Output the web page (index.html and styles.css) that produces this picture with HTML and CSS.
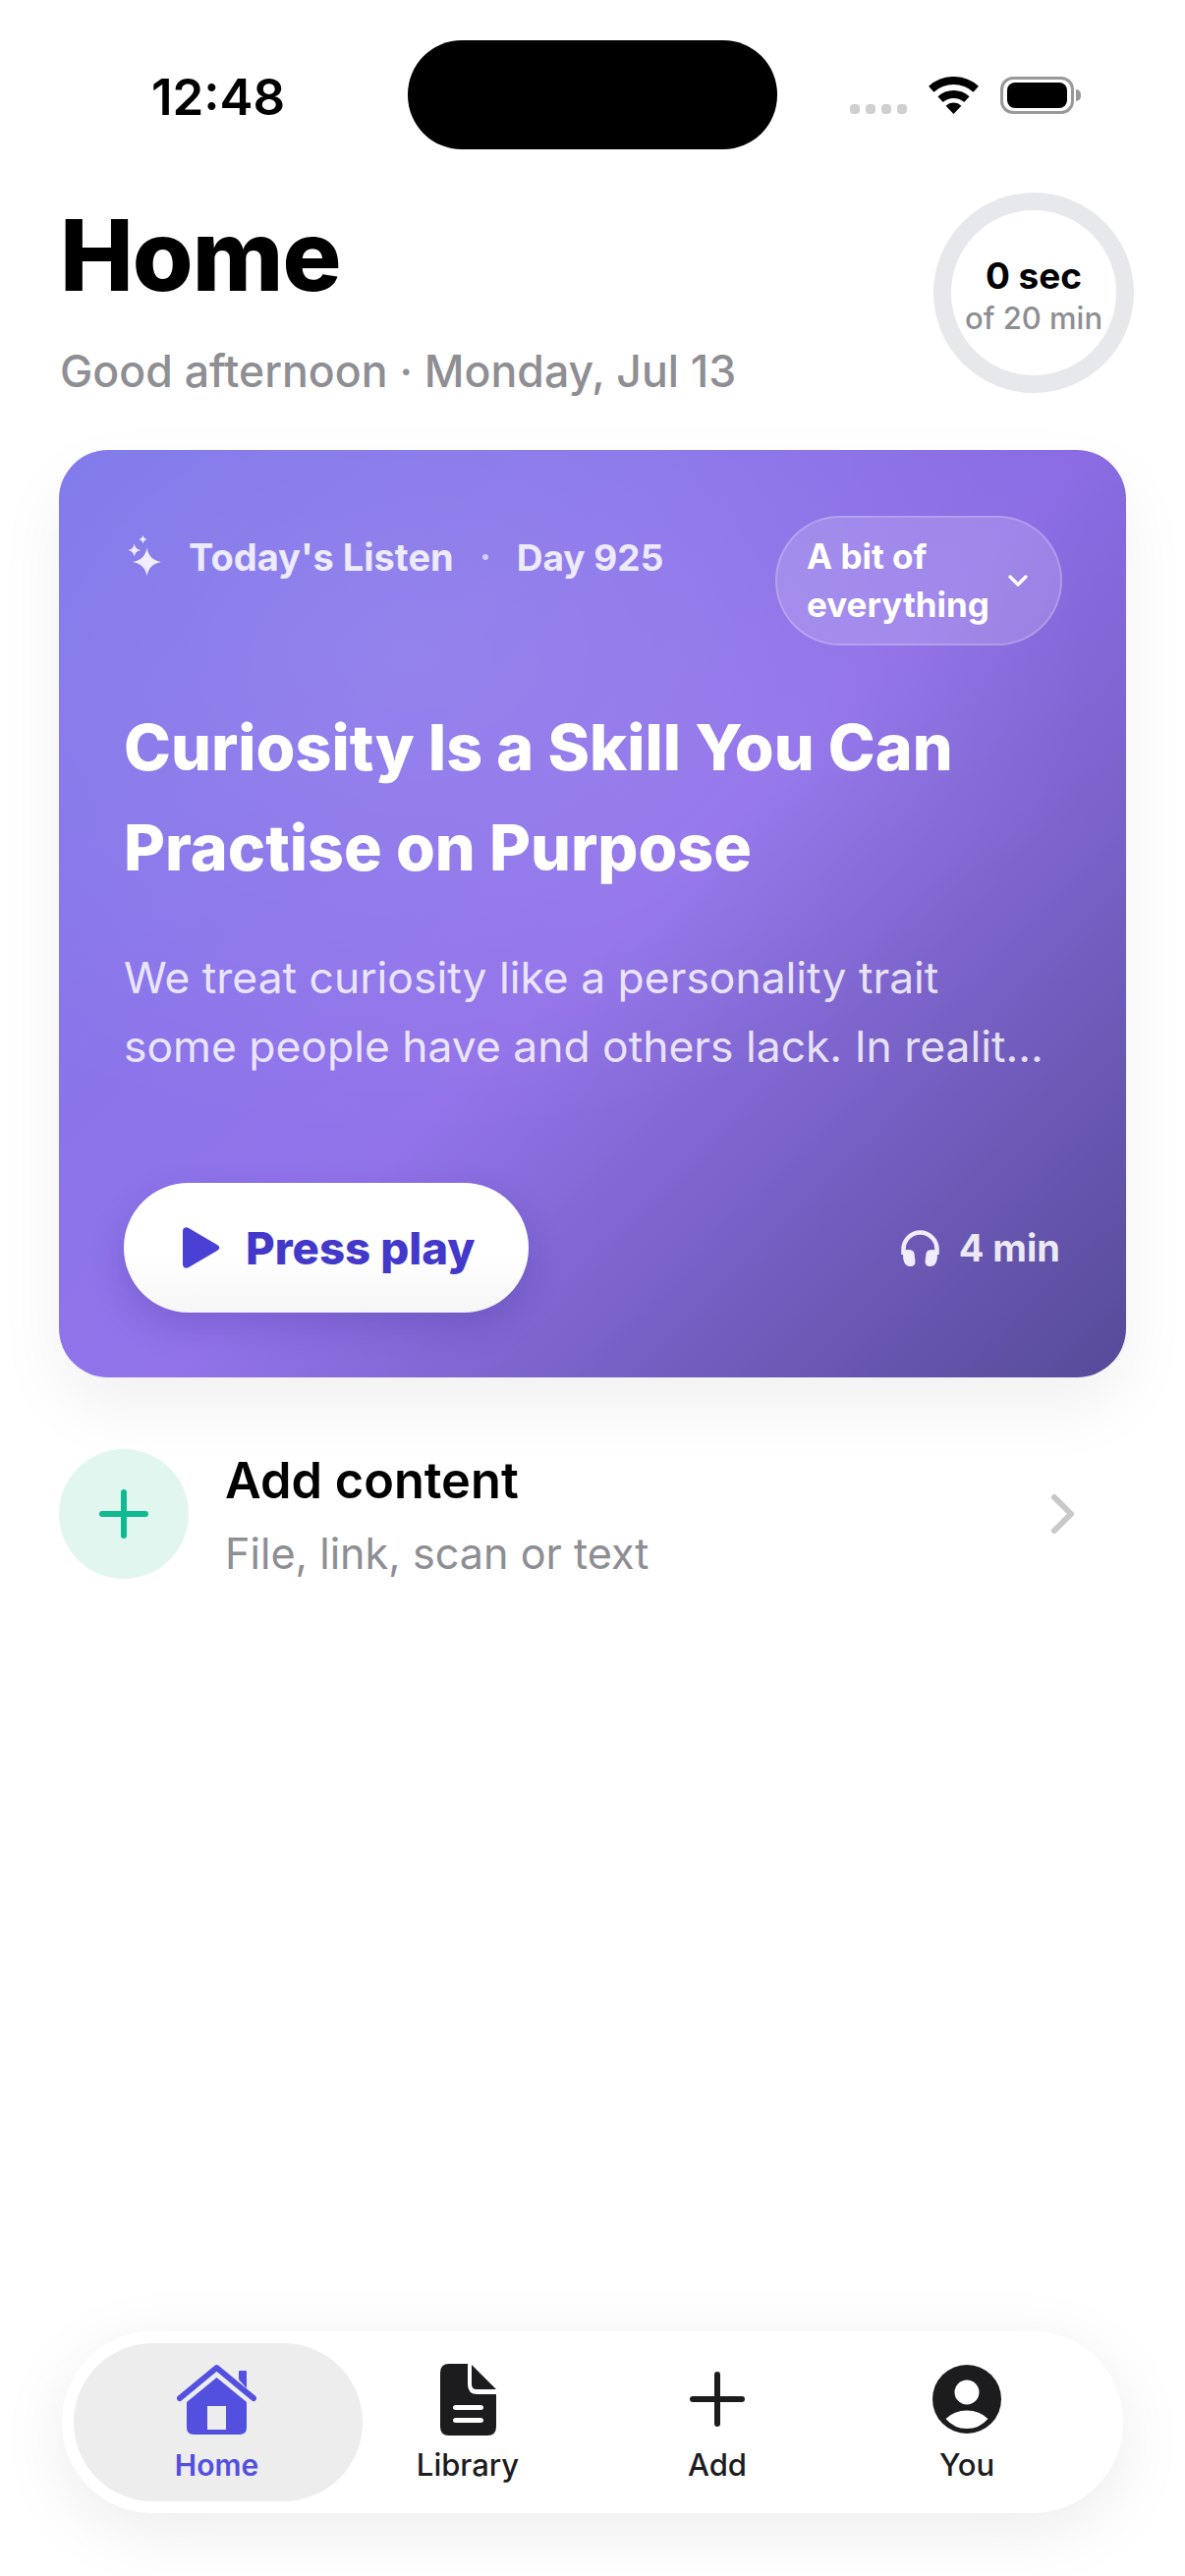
FILE: index.html
```html
<!doctype html>
<html>
<head>
<meta charset="utf-8">
<meta name="viewport" content="width=device-width, initial-scale=1.0">
<link rel="stylesheet" href="styles.css">
<title>Home</title>
</head>
<body>
<div class="screen">

  <div class="status">
    <div class="status-time">12:48</div>
    <div class="island"></div>
    <div class="status-icons">
      <div class="signal"><i></i><i></i><i></i><i></i></div>
      <svg class="wifi" viewBox="0 0 51 38">
        <path d="M2.75 12.7A34 34 0 0 1 48.25 12.7" fill="none" stroke="#000" stroke-width="8"/>
        <path d="M12.1 23.1A20 20 0 0 1 38.9 23.1" fill="none" stroke="#000" stroke-width="8"/>
        <path d="M25.5 38L17.6 29.8A11 11 0 0 1 33.4 29.8Z" fill="#000"/>
      </svg>
      <div class="battery"><div class="battery-level"></div></div>
      <div class="battery-tip"></div>
    </div>
  </div>

  <div class="header">
    <div class="header-text">
      <h1>Home</h1>
      <p class="greeting">Good afternoon · Monday, Jul 13</p>
    </div>
    <div class="ring">
      <div class="ring-value">0 sec</div>
      <div class="ring-goal">of 20 min</div>
    </div>
  </div>

  <div class="card">
    <div class="card-top">
      <div class="card-label">
        <svg class="sparkle" viewBox="0 0 36 44">
          <path d="M20.5 12.5Q22.5 25 35 27Q22.5 29 20.5 41.5Q18.5 29 6 27Q18.5 25 20.5 12.5Z" fill="#f1edfd"/>
          <path d="M7.7 8.5Q8.6 14.1 14.2 15Q8.6 15.9 7.7 21.5Q6.8 15.9 1.2 15Q6.8 14.1 7.7 8.5Z" fill="#f1edfd"/>
          <path d="M16.5 -0.5Q17.1 3.4 21 4Q17.1 4.6 16.5 8.5Q15.9 4.6 12 4Q15.9 3.4 16.5 -0.5Z" fill="#f1edfd"/>
        </svg>
        <span>Today's Listen</span>
        <span class="label-dot"></span>
        <span class="label-day">Day 925</span>
      </div>
      <div class="topic">
        <span>A bit of<br>everything</span>
        <svg class="topic-chevron" viewBox="0 0 22 14"><path d="M3 3L11 11L19 3" fill="none" stroke="#fff" stroke-width="3.4" stroke-linecap="round" stroke-linejoin="round"/></svg>
      </div>
    </div>
    <h2 class="card-title">Curiosity Is a Skill You Can<br>Practise on Purpose</h2>
    <p class="card-desc">We treat curiosity like a personality trait<br>some people have and others lack. In realit...</p>
    <div class="card-bottom">
      <div class="play-btn">
        <svg class="play-icon" viewBox="0 0 38 42"><path d="M0 4C0 1 3 -1 6 1L35 18C38 20 38 22 35 24L6 41C3 43 0 41 0 38Z" fill="#4b40d4"/></svg>
        <span>Press play</span>
      </div>
      <div class="duration">
        <svg class="phones" viewBox="0 0 39 37">
          <path d="M2.5 25V19.5A17 17 0 0 1 36.5 19.5V25" fill="none" stroke="#f1edfd" stroke-width="4.5"/>
          <path d="M2 25Q2 20 7 20Q13 20 13.5 24L14.5 32Q14.5 37 9.5 37Q2 37 2 25Z" fill="#f1edfd"/>
          <path d="M37 25Q37 20 32 20Q26 20 25.5 24L24.5 32Q24.5 37 29.5 37Q37 37 37 25Z" fill="#f1edfd"/>
        </svg>
        <span>4 min</span>
      </div>
    </div>
  </div>

  <div class="add-row">
    <div class="add-circle">
      <svg viewBox="0 0 50 50"><path d="M25 3V47M3 25H47" fill="none" stroke="#10b98f" stroke-width="6" stroke-linecap="round"/></svg>
    </div>
    <div class="add-text">
      <div class="add-title">Add content</div>
      <div class="add-sub">File, link, scan or text</div>
    </div>
    <svg class="add-chevron" viewBox="0 0 26 42"><path d="M4 4L21 21L4 38" fill="none" stroke="#c7c7cc" stroke-width="6" stroke-linecap="round" stroke-linejoin="round"/></svg>
  </div>

  <div class="nav">
    <div class="nav-item nav-active">
      <svg class="nav-icon icon-home" viewBox="0 0 81 72">
        <path d="M3 35L40.5 4L78 35" fill="none" stroke="#5350e0" stroke-width="6" stroke-linecap="round" stroke-linejoin="round"/>
        <path d="M63 16V8Q63 7 64 7H70Q71 7 71 8V25Z" fill="#5350e0"/>
        <path d="M40.5 14L71 39V65Q71 72 64 72H17Q10 72 10 65V39ZM31 43V67H50V43Z" fill="#5350e0" fill-rule="evenodd"/>
      </svg>
      <span>Home</span>
    </div>
    <div class="nav-item">
      <svg class="nav-icon icon-doc" viewBox="0 0 57 73">
        <path d="M9 0H28V21Q28 31 38 31H57V64Q57 73 48 73H9Q0 73 0 64V9Q0 0 9 0ZM16 42Q13 42 13 44.5Q13 47 16 47H41Q44 47 44 44.5Q44 42 41 42ZM16 55Q13 55 13 57.5Q13 60 16 60H41Q44 60 44 57.5Q44 55 41 55Z" fill="#1c1c1e" fill-rule="evenodd"/>
        <path d="M32 1L57 26H37Q32 26 32 21Z" fill="#1c1c1e"/>
      </svg>
      <span>Library</span>
    </div>
    <div class="nav-item">
      <svg class="nav-icon icon-plus" viewBox="0 0 56 56"><path d="M28 3V53M3 28H53" fill="none" stroke="#1c1c1e" stroke-width="6" stroke-linecap="round"/></svg>
      <span>Add</span>
    </div>
    <div class="nav-item">
      <svg class="nav-icon icon-user" viewBox="0 0 70 70">
        <circle cx="35" cy="35" r="35" fill="#1c1c1e"/>
        <circle cx="35" cy="28" r="12.5" fill="#fff"/>
        <path d="M13.5 55Q22 46.5 35 46.5Q48 46.5 56.5 55Q48 65 35 65Q22 65 13.5 55Z" fill="#fff"/>
      </svg>
      <span>You</span>
    </div>
  </div>

</div>
</body>
</html>
```

FILE: styles.css
```css
* {
    box-sizing: border-box;
}
html, body {
    margin: 0;
    padding: 0;
    background: #fff;
}
body {
    font-family: Inter, "Liberation Sans", sans-serif;
    color: #000;
}
h1, h2, p {
    margin: 0;
}
.screen {
    width: 1206px;
    height: 2622px;
    overflow: hidden;
    display: flex;
    flex-direction: column;
}

/* status bar */
.status {
    display: flex;
    height: 152px;
    padding-top: 41px;
}
.status-time {
    width: 415px;
    padding-left: 154px;
    padding-top: 30px;
    font-size: 51px;
    font-weight: 600;
    line-height: 55px;
}
.island {
    width: 376px;
    height: 111px;
    background: #000;
    border-radius: 55px;
}
.status-icons {
    display: flex;
    align-items: flex-end;
    height: 75px;
    padding-left: 74px;
}
.signal {
    display: flex;
    gap: 6px;
}
.signal i {
    display: block;
    width: 10px;
    height: 10px;
    border-radius: 4px;
    background: #cfcfcf;
}
.wifi {
    width: 51px;
    height: 38px;
    margin-left: 22px;
}
.battery {
    width: 75px;
    height: 38px;
    margin-left: 22px;
    padding: 3px 4px;
    border: 3px solid #999;
    border-radius: 13px;
}
.battery-level {
    height: 100%;
    background: #000;
    border-radius: 8px;
}
.battery-tip {
    width: 5px;
    height: 12px;
    margin: 0 0 13px 2px;
    background: #999;
    border-radius: 0 6px 6px 0;
}

/* header */
.header {
    display: flex;
    justify-content: space-between;
    height: 204px;
    margin-top: 44px;
    padding: 0 52px 0 61px;
}
h1 {
    margin-top: 14px;
    font-size: 100px;
    font-weight: 850;
    line-height: 100px;
    letter-spacing: -1px;
}
.greeting {
    margin-top: 44px;
    font-size: 44.6px;
    font-weight: 500;
    line-height: 48px;
    color: #8e8e93;
}
.ring {
    width: 204px;
    height: 204px;
    padding-top: 6px;
    border: 18px solid #e7e8ec;
    border-radius: 50%;
    display: flex;
    flex-direction: column;
    align-items: center;
    justify-content: center;
    white-space: nowrap;
}
.ring-value {
    font-size: 37px;
    font-weight: 700;
    line-height: 46px;
}
.ring-goal {
    font-size: 31px;
    font-weight: 500;
    line-height: 40px;
    color: #8e8e93;
}

/* today's listen card */
.card {
    margin: 58px 60px 0;
    height: 944px;
    padding: 67px 65px 0 66px;
    border-radius: 50px;
    color: #fff;
    background:
        radial-gradient(ellipse 500px 400px at 100% 0%, rgba(90, 60, 190, 0.14), rgba(90, 60, 190, 0)),
        radial-gradient(ellipse 700px 500px at 33% 22%, rgba(255, 255, 255, 0.1), rgba(255, 255, 255, 0)),
        linear-gradient(135deg, #7d76ea 0%, #9273ea 52%, #564a98 100%);
    box-shadow: 0 30px 70px rgba(0, 0, 0, 0.06);
}
.card-top {
    display: flex;
    justify-content: space-between;
    align-items: flex-start;
}
.card-label {
    display: flex;
    align-items: center;
    height: 84px;
    font-size: 38px;
    font-weight: 700;
    color: rgba(255, 255, 255, 0.86);
}
.label-day {
    font-size: 37px;
}
.sparkle {
    width: 36px;
    height: 44px;
    margin-left: 3px;
    margin-right: 27px;
    overflow: visible;
}
.label-dot {
    width: 6px;
    height: 6px;
    margin: 0 29px;
    border-radius: 50%;
    background: rgba(255, 255, 255, 0.6);
}
.topic {
    display: flex;
    align-items: center;
    gap: 18px;
    height: 132px;
    padding: 0 32px 0 30px;
    border: 2px solid rgba(255, 255, 255, 0.2);
    border-radius: 66px;
    background: rgba(255, 255, 255, 0.16);
    font-size: 35px;
    font-weight: 700;
    line-height: 49px;
    white-space: nowrap;
}
.topic-chevron {
    width: 22px;
    height: 14px;
}
.card-title {
    margin-top: 53px;
    font-size: 64.5px;
    font-weight: 800;
    line-height: 102px;
    white-space: nowrap;
}
.card-desc {
    margin-top: 46px;
    font-size: 44.4px;
    line-height: 70px;
    color: rgba(255, 255, 255, 0.84);
    white-space: nowrap;
}
.card-bottom {
    display: flex;
    justify-content: space-between;
    align-items: center;
    margin-top: 104px;
}
.play-btn {
    display: flex;
    align-items: center;
    gap: 26px;
    width: 412px;
    height: 132px;
    padding-left: 60px;
    border-radius: 66px;
    background: linear-gradient(180deg, #fff 55%, #f6f6f7 100%);
    box-shadow: 0 14px 36px rgba(40, 20, 120, 0.2);
    color: #4338ca;
    font-size: 45.6px;
    font-weight: 800;
}
.play-icon {
    width: 38px;
    height: 42px;
}
.duration {
    display: flex;
    align-items: center;
    gap: 20px;
    padding-right: 2px;
    font-size: 38px;
    font-weight: 700;
    color: rgba(255, 255, 255, 0.88);
}
.phones {
    width: 39px;
    height: 37px;
}

/* add content row */
.add-row {
    display: flex;
    align-items: center;
    margin: 73px 60px 0;
    padding-right: 51px;
}
.add-circle {
    width: 132px;
    height: 132px;
    border-radius: 50%;
    background: #e2f6f0;
    display: flex;
    align-items: center;
    justify-content: center;
}
.add-circle svg {
    width: 50px;
    height: 50px;
}
.add-text {
    flex: 1;
    margin-left: 37px;
}
.add-title {
    font-size: 50.5px;
    font-weight: 600;
    line-height: 64px;
}
.add-sub {
    margin-top: 16px;
    font-size: 43.2px;
    line-height: 52px;
    color: #8e8e93;
}
.add-chevron {
    width: 26px;
    height: 42px;
}

/* tab bar */
.nav {
    display: flex;
    align-items: stretch;
    width: 1080px;
    height: 185px;
    margin: auto 63px 64px;
    padding: 12px;
    border-radius: 92px;
    background: #fff;
    box-shadow: 0 16px 70px rgba(0, 0, 0, 0.08);
}
.nav-item {
    flex: 0 0 254px;
    display: flex;
    flex-direction: column;
    align-items: center;
    justify-content: flex-end;
    padding-bottom: 17px;
    font-size: 31px;
    font-weight: 500;
    line-height: 40px;
    color: #1c1c1e;
}
.nav-active {
    flex: 0 0 294px;
    margin-right: -20px;
    padding-right: 3px;
    border-radius: 81px;
    background: #ededee;
    color: #5350e0;
    font-size: 30px;
    font-weight: 600;
}
.nav-icon {
    display: block;
}
.icon-home {
    width: 81px;
    height: 72px;
    margin-bottom: 11px;
}
.icon-doc {
    width: 57px;
    height: 73px;
    margin-bottom: 10px;
}
.icon-plus {
    width: 56px;
    height: 56px;
    margin-bottom: 19px;
}
.icon-user {
    width: 70px;
    height: 70px;
    margin-bottom: 12px;
}
```
